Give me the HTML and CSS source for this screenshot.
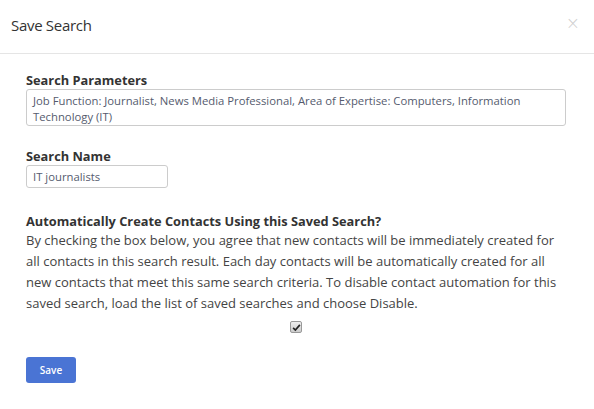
FILE: index.html
```html
<!DOCTYPE html>
<html>
<head>
<meta charset="utf-8">
<link rel="stylesheet" href="styles.css">
</head>
<body>
<div class="modal">
  <div class="modal-header">
    <h4 class="modal-title">Save Search</h4>
    <span class="close">&times;</span>
  </div>
  <div class="modal-body">
    <div class="field">
      <label class="label">Search Parameters</label>
      <div class="textarea">Job Function: Journalist, News Media Professional, Area of Expertise: Computers, Information Technology (IT)</div>
    </div>
    <div class="field">
      <label class="label">Search Name</label>
      <div class="input">IT journalists</div>
    </div>
    <div class="field auto">
      <label class="label">Automatically Create Contacts Using this Saved Search?</label>
      <p class="desc">By checking the box below, you agree that new contacts will be immediately created for all contacts in this search result. Each day contacts will be automatically created for all new contacts that meet this same search criteria. To disable contact automation for this saved search, load the list of saved searches and choose Disable.</p>
      <div class="check-row"><span class="checkbox"><svg viewBox="0 0 12 12" width="9" height="9"><path d="M1.5 6.5 L4.5 9.5 L10.5 2.5" fill="none" stroke="#222" stroke-width="2.2"/></svg></span></div>
    </div>
    <button class="btn">Save</button>
  </div>
</div>
</body>
</html>
```
FILE: styles.css
```css
* { box-sizing: border-box; }
html, body { margin: 0; padding: 0; background: #fff; }
body { font-family: "Open Sans", "Segoe UI", sans-serif; color: #333; width: 594px; height: 409px; overflow: hidden; }
.modal { width: 594px; }
.modal-header {
  height: 54px;
  border-bottom: 1px solid #e5e5e5;
  display: flex;
  align-items: center;
  justify-content: space-between;
  padding: 0 14px 4px 11px;
}
.modal-title { margin: 0; font-size: 15px; font-weight: 400; color: #333; letter-spacing: -0.3px; }
.close { font-size: 17px; color: #cfcfcf; line-height: 1; margin-top: -3px; font-family: "DejaVu Sans", sans-serif; font-weight: 300; }
.modal-body { padding: 17px 28px 0 26px; }
.field { margin-bottom: 21px; }
.label { display: block; font-weight: 700; font-size: 12.8px; line-height: 18px; margin-bottom: 0; color: #333; }
.textarea {
  border: 1px solid #ccc;
  border-radius: 3px;
  padding: 3px 6px;
  height: 37px;
  font-size: 11.3px;
  line-height: 16px;
  color: #555b6e;
}
.input {
  width: 142px;
  height: 23px;
  border: 1px solid #ccc;
  border-radius: 3px;
  padding: 0 6px;
  font-size: 11.3px;
  line-height: 21px;
  color: #555b6e;
}
.auto { margin-bottom: 0; margin-top: 24px; }
.desc { margin: 0; font-size: 13px; line-height: 21px; color: #444; }
.check-row { display: flex; justify-content: center; padding: 7px 0 0; }
.checkbox {
  width: 12px; height: 12px;
  border: 1px solid #999;
  border-radius: 2px;
  background: linear-gradient(#eee, #ccc);
  display: flex; align-items: center; justify-content: center;
}
.btn {
  margin-top: 24px;
  width: 50px; height: 26px;
  background: #4a74d4;
  color: #fff;
  border: none;
  border-radius: 3px;
  font-family: "Open Sans", sans-serif;
  font-size: 10px;
  font-weight: 600;
  padding: 0;
}
```
